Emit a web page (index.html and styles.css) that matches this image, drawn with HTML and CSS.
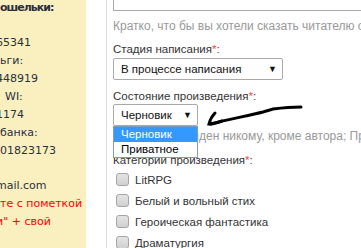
FILE: index.html
```html
<!DOCTYPE html>
<html lang="ru">
  <head>
    <meta charset="UTF-8" />
    <title>Новое произведение</title>
    <link rel="stylesheet" href="styles.css">
  </head>
  <body>
    <!-- Sidebar with payment info -->
    <aside class="sidebar">
      <div class="line bold">ошельки:</div>
      <div class="line blank"></div>
      <div class="line cut">65341</div>
      <div class="line">ьги:</div>
      <div class="line cut">448919</div>
      <div class="line shift">WI:</div>
      <div class="line cut">1174</div>
      <div class="line">банка:</div>
      <div class="line">01823173</div>
      <div class="line blank"></div>
      <div class="line cut">mail.com</div>
      <div class="line red">те с пометкой</div>
      <div class="line red cut">и" + свой</div>
    </aside>

    <!-- Work form -->
    <main class="content">
      <div class="textarea"></div>
      <p class="hint">Кратко, что бы вы хотели сказать читателю о вашем произведении</p>

      <label class="field-label">Стадия написания<span class="req">*</span>:</label>
      <div class="select wide">
        <span>В процессе написания</span>
        <span class="arrow">&#9660;</span>
      </div>

      <label class="field-label">Состояние произведения<span class="req">*</span>:</label>
      <div class="dropdown">
        <div class="select narrow">
          <span>Черновик</span>
          <span class="arrow">&#9660;</span>
        </div>
        <ul class="options">
          <li class="active">Черновик</li>
          <li>Приватное</li>
        </ul>
        <svg class="scribble" width="110" height="30" viewBox="0 0 110 30">
          <path d="M9 25 C 30 20, 50 16, 62 13 L 72 10 C 80 9, 88 8, 100 8" fill="none" stroke="#000" stroke-width="3" stroke-linecap="round" />
          <path d="M14 14 C 11 17, 9 21, 8 25 C 12 25, 16 24, 21 22" fill="none" stroke="#000" stroke-width="3" stroke-linecap="round" />
        </svg>
      </div>
      <p class="hint under">Черновик не виден никому, кроме автора; Приватное видно только вам</p>

      <label class="field-label after-hint">Категории произведения<span class="req">*</span>:</label>
      <ul class="checks">
        <li><span class="box"></span>LitRPG</li>
        <li><span class="box"></span>Белый и вольный стих</li>
        <li><span class="box"></span>Героическая фантастика</li>
        <li><span class="box"></span>Драматургия</li>
      </ul>
    </main>
  </body>
</html>
```

FILE: styles.css
```css
body {
  margin: 0;
  padding: 0;
  display: flex;
  height: 248px;
  overflow: hidden;
  background-color: #fff;
  font-family: "Liberation Sans", Arial, sans-serif;
  font-size: 11.5px;
  color: #333;
}

.sidebar {
  width: 86px;
  flex-shrink: 0;
  background-color: #f9efbf;
  overflow: hidden;
  white-space: nowrap;
  font-family: "DejaVu Sans", sans-serif;
  font-size: 11px;
  color: #2b3040;
}

.line {
  height: 18px;
  line-height: 18px;
}

.line:first-child {
  margin-top: -1px;
}

.line.blank {
  height: 17px;
}

.cut {
  margin-left: -4px;
}

.shift {
  margin-left: 5px;
}

.bold {
  font-weight: bold;
  letter-spacing: -1px;
}

.red {
  color: #f00;
}

.content {
  flex: 1;
  margin-left: 20px;
  border-left: 1px solid #ddd;
  padding-left: 6px;
  white-space: nowrap;
  overflow: hidden;
}

.textarea {
  height: 10px;
  border: 1px solid #aaa;
  border-top: none;
  margin-right: -20px;
}

.hint {
  margin: 8px 0 0;
  color: #999;
  font-size: 12px;
  line-height: 14px;
}

.hint.under {
  margin-top: 3px;
}

.field-label {
  display: block;
  margin-top: 9px;
  line-height: 14px;
}

.field-label.after-hint {
  margin-top: 10px;
}

.req {
  color: #f44;
}

.select {
  box-sizing: border-box;
  height: 22px;
  margin-top: 2px;
  border: 1px solid #aaa;
  border-radius: 2px;
  background-color: #fff;
  display: flex;
  align-items: center;
  justify-content: space-between;
  padding: 0 5px 0 7px;
  color: #111;
}

.select.wide {
  width: 170px;
}

.select.narrow {
  width: 85px;
  margin-top: 1px;
}

.arrow {
  font-size: 9px;
}

.dropdown {
  position: relative;
}

.options {
  position: absolute;
  top: 22px;
  left: 0;
  z-index: 2;
  width: 85px;
  box-sizing: border-box;
  margin: 0;
  padding: 0;
  list-style: none;
  border: 1px solid #7f9db9;
  background-color: #fff;
  color: #000;
}

.options li {
  height: 15px;
  line-height: 15px;
  padding-left: 7px;
}

.options li.active {
  background-color: #3399ff;
  color: #fff;
}

.scribble {
  position: absolute;
  left: 88px;
  top: -5px;
}

.checks {
  list-style: none;
  margin: 2px 0 0;
  padding: 0;
}

.checks li {
  height: 21px;
  display: flex;
  align-items: center;
}

.box {
  width: 11px;
  height: 11px;
  margin: 0 6px 0 3px;
  border: 1px solid #a5a5a5;
  border-radius: 3px;
  background: linear-gradient(#e4e4e4, #d0d0d0);
}
```
